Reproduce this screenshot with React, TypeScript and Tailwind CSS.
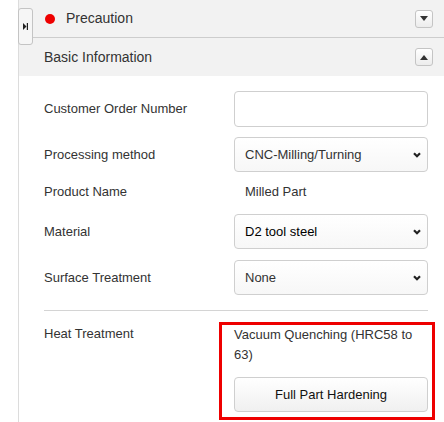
const font = { fontFamily: '"Liberation Sans", Arial, sans-serif' };

function Caret({ up }: { up?: boolean }) {
  return (
    <button className="w-[18px] h-[18px] shrink-0 flex items-center justify-center rounded-[3px] border border-[#c4c4c4] bg-gradient-to-b from-white to-[#ececec]">
      <svg width="8" height="5" viewBox="0 0 8 5">
        {up ? <path d="M0 5 L4 0 L8 5 Z" fill="#333" /> : <path d="M0 0 L8 0 L4 5 Z" fill="#333" />}
      </svg>
    </button>
  );
}

function Select({ value, strong }: { value: string; strong?: boolean }) {
  return (
    <div className="h-[35px] flex items-center justify-between pl-[10px] pr-[6px] rounded-[4px] border border-[#cfcfcf] bg-gradient-to-b from-white to-[#f7f7f7]">
      <span className={strong ? "text-[13px] text-black" : "text-[13px] text-[#333]"}>{value}</span>
      <svg width="8" height="6" viewBox="0 0 8 6">
        <path d="M1 1.2 L4 4.2 L7 1.2" fill="none" stroke="#222" strokeWidth="2.2" />
      </svg>
    </div>
  );
}

function Row({ label, children, className = "" }: { label: string; children: React.ReactNode; className?: string }) {
  return (
    <div className={`flex items-center ${className}`}>
      <div className="w-[190px] shrink-0 text-[13px] text-[#333]">{label}</div>
      <div className="w-[194px] shrink-0">{children}</div>
    </div>
  );
}

export default function App() {
  return (
    <div className="relative w-[444px] h-[422px] bg-white overflow-hidden flex" style={font}>
      <div className="w-[19px] shrink-0 border-r border-[#dcdcdc]" />

      <button className="absolute left-[18px] top-[8px] w-[15px] h-[37px] rounded-[3px] border border-[#c4c4c4] bg-[#f6f6f6] flex items-center justify-center z-10">
        <svg width="5" height="7" viewBox="0 0 5 7">
          <path d="M0 0 L3.5 3.5 L0 7 Z" fill="#222" />
          <rect x="3.8" y="0" width="1.2" height="7" fill="#222" />
        </svg>
      </button>

      <div className="flex-1 min-w-0 flex flex-col">
        <div className="h-[38px] bg-[#f2f2f2] border-b border-[#cdcdcd] flex items-center pl-[26px] pr-[11px]">
          <span className="w-[10px] h-[10px] rounded-full bg-[#ee0000]" />
          <span className="ml-[11px] text-[14px] text-[#333] flex-1">Precaution</span>
          <Caret />
        </div>
        <div className="h-[38px] bg-[#f2f2f2] flex items-center pl-[25px] pr-[11px]">
          <span className="text-[14px] text-[#333] flex-1">Basic Information</span>
          <Caret up />
        </div>

        <div className="pl-[25px] pr-[16px] pt-[15px] flex flex-col">
          <Row label="Customer Order Number">
            <div className="h-[36px] rounded-[4px] border border-[#cfcfcf] bg-white" />
          </Row>
          <Row label="Processing method" className="mt-[10px]">
            <Select value="CNC-Milling/Turning" />
          </Row>
          <Row label="Product Name" className="mt-[10px] h-[20px]">
            <div className="pl-[11px] text-[13px] text-[#333]">Milled Part</div>
          </Row>
          <Row label="Material" className="mt-[12px]">
            <Select value="D2 tool steel" strong />
          </Row>
          <Row label="Surface Treatment" className="mt-[11px]">
            <Select value="None" />
          </Row>

          <div className="mt-[15px] border-t border-[#d4d4d4]" />

          <div className="flex mt-[11px]">
            <div className="w-[175px] shrink-0 pt-[2px] text-[13px] text-[#333]">Heat Treatment</div>
            <div className="w-[216px] shrink-0 border-[3px] border-[#ee0000] pl-[12px] pr-[4px] pb-[5px]">
              <div className="text-[13px] leading-[20px] text-[#333]">Vacuum Quenching (HRC58 to 63)</div>
              <button className="mt-[12px] w-full h-[35px] rounded-[4px] border border-[#cfcfcf] bg-gradient-to-b from-white to-[#f0f0f0] text-[13px] text-[#111]">
                Full Part Hardening
              </button>
            </div>
          </div>
        </div>
      </div>
    </div>
  );
}
